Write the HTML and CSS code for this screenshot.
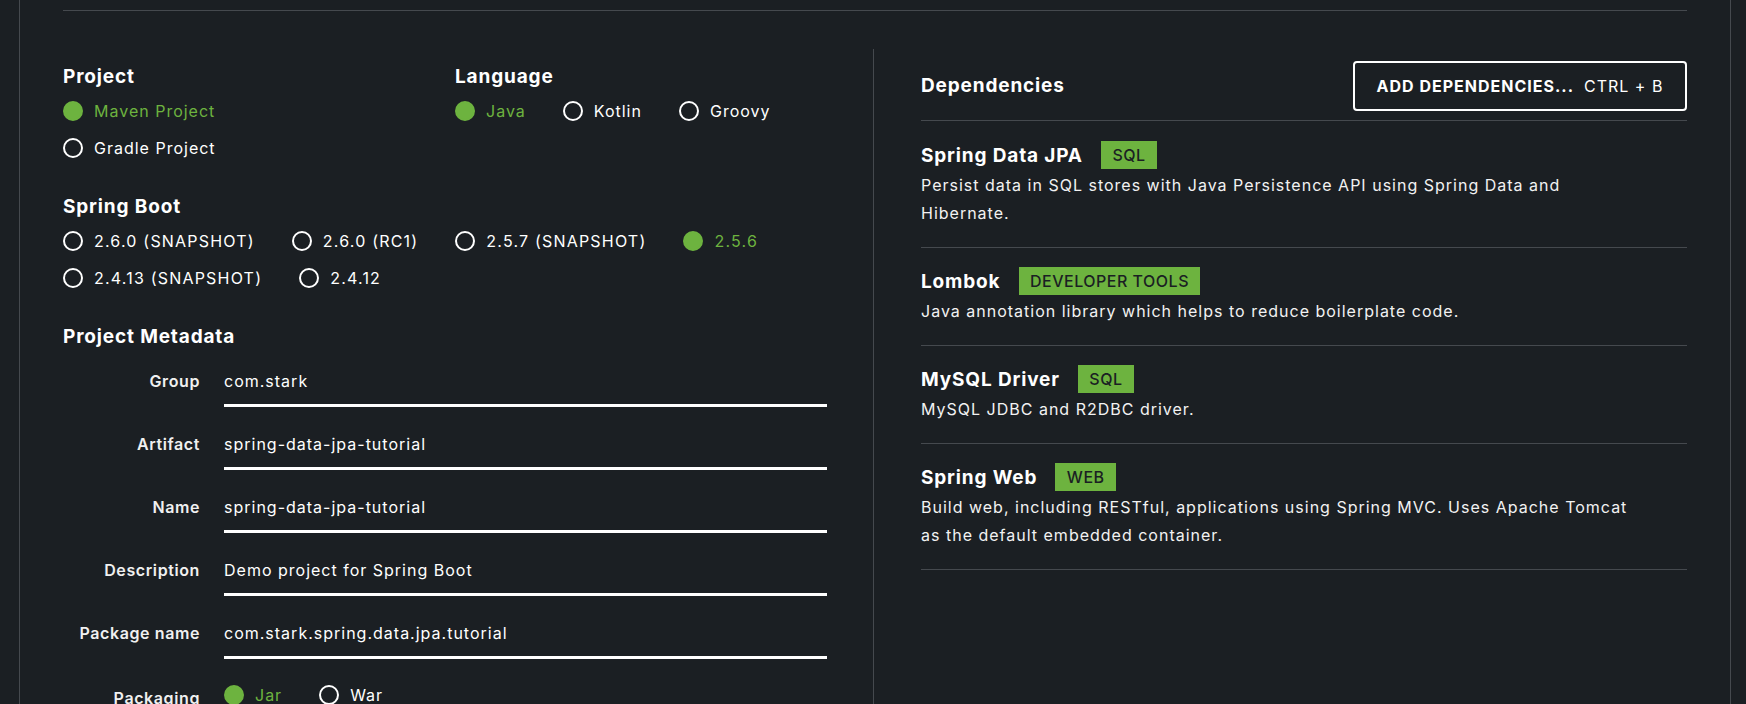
FILE: index.html
```html
<!DOCTYPE html>
<html lang="en">
<head>
<meta charset="utf-8">
<title>Spring Initializr</title>
<link rel="stylesheet" href="styles.css">
</head>
<body>
<div class="frame">
  <div class="content">
    <div class="topbar"></div>
    <div class="columns">
      <div class="left">
        <div class="row-two">
          <section class="group group-project">
            <h2 class="heading">Project</h2>
            <div class="radios">
              <label class="radio selected"><span class="dot"></span><span>Maven Project</span></label>
            </div>
            <div class="radios">
              <label class="radio"><span class="dot"></span><span>Gradle Project</span></label>
            </div>
          </section>
          <section class="group">
            <h2 class="heading">Language</h2>
            <div class="radios">
              <label class="radio selected"><span class="dot"></span><span>Java</span></label>
              <label class="radio"><span class="dot"></span><span>Kotlin</span></label>
              <label class="radio"><span class="dot"></span><span>Groovy</span></label>
            </div>
          </section>
        </div>
        <section class="group section">
          <h2 class="heading">Spring Boot</h2>
          <div class="radios boot">
            <label class="radio"><span class="dot"></span><span>2.6.0 (SNAPSHOT)</span></label>
            <label class="radio"><span class="dot"></span><span>2.6.0 (RC1)</span></label>
            <label class="radio"><span class="dot"></span><span>2.5.7 (SNAPSHOT)</span></label>
            <label class="radio selected"><span class="dot"></span><span>2.5.6</span></label>
            <label class="radio"><span class="dot"></span><span>2.4.13 (SNAPSHOT)</span></label>
            <label class="radio"><span class="dot"></span><span>2.4.12</span></label>
          </div>
        </section>
        <section class="group section">
          <h2 class="heading">Project Metadata</h2>
          <div class="fields">
            <div class="field"><span class="field-label">Group</span><span class="field-input">com.stark</span></div>
            <div class="field"><span class="field-label">Artifact</span><span class="field-input">spring-data-jpa-tutorial</span></div>
            <div class="field"><span class="field-label">Name</span><span class="field-input">spring-data-jpa-tutorial</span></div>
            <div class="field"><span class="field-label">Description</span><span class="field-input">Demo project for Spring Boot</span></div>
            <div class="field"><span class="field-label">Package name</span><span class="field-input">com.stark.spring.data.jpa.tutorial</span></div>
            <div class="field field-radio"><span class="field-label">Packaging</span>
              <div class="radios packaging">
                <label class="radio selected"><span class="dot"></span><span>Jar</span></label>
                <label class="radio"><span class="dot"></span><span>War</span></label>
              </div>
            </div>
          </div>
        </section>
      </div>
      <div class="right">
        <div class="deps-header">
          <h2 class="heading">Dependencies</h2>
          <button class="add-btn"><strong>ADD DEPENDENCIES...</strong><span class="shortcut">CTRL + B</span></button>
        </div>
        <ul class="deps">
          <li class="dep">
            <div class="dep-title"><span class="dep-name">Spring Data JPA</span><span class="badge">SQL</span></div>
            <p class="dep-desc">Persist data in SQL stores with Java Persistence API using Spring Data and Hibernate.</p>
          </li>
          <li class="dep">
            <div class="dep-title"><span class="dep-name">Lombok</span><span class="badge">DEVELOPER TOOLS</span></div>
            <p class="dep-desc">Java annotation library which helps to reduce boilerplate code.</p>
          </li>
          <li class="dep">
            <div class="dep-title"><span class="dep-name">MySQL Driver</span><span class="badge">SQL</span></div>
            <p class="dep-desc">MySQL JDBC and R2DBC driver.</p>
          </li>
          <li class="dep">
            <div class="dep-title"><span class="dep-name">Spring Web</span><span class="badge">WEB</span></div>
            <p class="dep-desc">Build web, including RESTful, applications using Spring MVC. Uses Apache Tomcat as the default embedded container.</p>
          </li>
        </ul>
      </div>
    </div>
  </div>
</div>
</body>
</html>
```

FILE: styles.css
```css
* { box-sizing: border-box; }
html, body { margin: 0; padding: 0; height: 100%; }
body {
  background: #1b1f23;
  color: #ffffff;
  font-family: "Inter", "Liberation Sans", sans-serif;
  font-size: 16px;
  letter-spacing: 1px;
  overflow: hidden;
}
.frame {
  margin-left: 19px;
  width: 1712px;
  height: 704px;
  border-left: 1px solid #45494e;
  border-right: 1px solid #45494e;
}
.content {
  margin: 0 43px;
  height: 100%;
  display: flex;
  flex-direction: column;
}
.topbar {
  height: 11px;
  border-bottom: 1px solid #45494e;
  flex: none;
}
.columns {
  margin-top: 38px;
  display: flex;
  flex: 1;
}
.left {
  width: 811px;
  padding-right: 46px;
  padding-top: 16px;
  border-right: 1px solid #45494e;
}
.right {
  flex: 1;
  padding-left: 47px;
}
.heading {
  margin: 0;
  font-size: 19px;
  line-height: 24px;
  font-weight: 700;
  letter-spacing: 0.85px;
}
.row-two { display: flex; }
.group-project { width: 392px; }
.section { margin-top: 29px; }
.radios {
  display: flex;
  flex-wrap: wrap;
  margin-top: 3px;
}
.radios + .radios { margin-top: 0; }
.radios.boot { letter-spacing: 1.2px; }
.radio {
  display: flex;
  align-items: center;
  gap: 11px;
  height: 37px;
  margin-right: 37px;
  color: #ffffff;
}
.dot {
  width: 20px;
  height: 20px;
  border-radius: 50%;
  border: 2px solid #ffffff;
  flex: none;
}
.radio.selected { color: #6db33f; }
.radio.selected .dot { background: #6db33f; border-color: #6db33f; }
.fields { margin-top: 20px; }
.field {
  display: flex;
  gap: 24px;
  margin-bottom: 25px;
}
.field-label {
  width: 137px;
  flex: none;
  text-align: right;
  line-height: 24px;
  font-weight: 600;
  letter-spacing: 0.6px;
  color: #f0f0f0;
}
.field-input {
  flex: 1;
  line-height: 24px;
  padding-bottom: 11px;
  border-bottom: 3px solid #ffffff;
}
.field-radio { align-items: center; margin-top: -2px; }
.packaging { margin-top: -6px; }
.deps-header {
  display: flex;
  justify-content: space-between;
  align-items: center;
  padding: 12px 0 9px;
  border-bottom: 1px solid #45494e;
}
.add-btn {
  width: 334px;
  height: 50px;
  background: transparent;
  border: 2px solid #ffffff;
  border-radius: 4px;
  color: #ffffff;
  font-family: inherit;
  font-size: 16px;
  letter-spacing: 1px;
  display: flex;
  align-items: center;
  justify-content: center;
  gap: 10px;
}
.add-btn strong { font-weight: 700; }
.deps { list-style: none; margin: 0; padding: 0; }
.dep {
  padding: 19px 0 20px;
  border-bottom: 1px solid #45494e;
}
.dep:first-child { padding-top: 20px; }
.dep-title {
  display: flex;
  align-items: center;
  gap: 18px;
  height: 28px;
}
.dep-name { font-size: 19px; font-weight: 700; letter-spacing: 0.85px; }
.badge {
  background: #6db33f;
  color: #1b1f23;
  height: 28px;
  line-height: 28px;
  padding: 0 11.5px;
  font-size: 16px;
  font-weight: 500;
  letter-spacing: 0.5px;
}
.dep-desc {
  margin: 2px 0 0;
  line-height: 28px;
  max-width: 710px;
  color: #f2f2f2;
}
```
